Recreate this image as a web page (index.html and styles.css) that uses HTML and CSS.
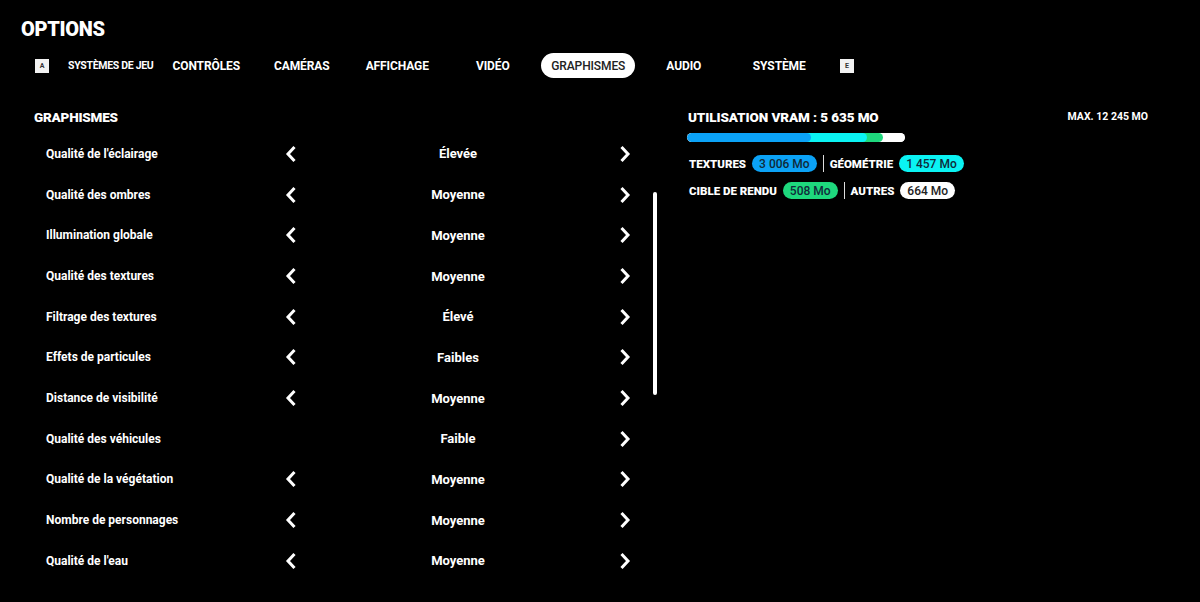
FILE: index.html
```html
<!DOCTYPE html>
<html lang="fr">
<head>
<meta charset="utf-8">
<title>Options</title>
<link rel="stylesheet" href="styles.css">
</head>
<body>
<div class="page">
  <h1 class="title">OPTIONS</h1>

  <nav class="tabs">
    <span class="key">A</span>
    <span class="tab tab-small">SYSTÈMES DE JEU</span>
    <span class="tab">CONTRÔLES</span>
    <span class="tab">CAMÉRAS</span>
    <span class="tab">AFFICHAGE</span>
    <span class="tab">VIDÉO</span>
    <span class="tab active">GRAPHISMES</span>
    <span class="tab">AUDIO</span>
    <span class="tab">SYSTÈME</span>
    <span class="key key-e">E</span>
  </nav>

  <main class="main">
    <section class="settings">
      <h2 class="section-title">GRAPHISMES</h2>
      <div class="settings-body">
        <div class="list">
          <div class="row"><span class="label">Qualité de l'éclairage</span><span class="chev"><svg width="12" height="18" viewBox="0 0 12 18"><path d="M9.5 2 L3 9 L9.5 16"/></svg></span><span class="value">Élevée</span><span class="chev"><svg width="12" height="18" viewBox="0 0 12 18"><path d="M2.5 2 L9 9 L2.5 16"/></svg></span></div>
          <div class="row"><span class="label">Qualité des ombres</span><span class="chev"><svg width="12" height="18" viewBox="0 0 12 18"><path d="M9.5 2 L3 9 L9.5 16"/></svg></span><span class="value">Moyenne</span><span class="chev"><svg width="12" height="18" viewBox="0 0 12 18"><path d="M2.5 2 L9 9 L2.5 16"/></svg></span></div>
          <div class="row"><span class="label">Illumination globale</span><span class="chev"><svg width="12" height="18" viewBox="0 0 12 18"><path d="M9.5 2 L3 9 L9.5 16"/></svg></span><span class="value">Moyenne</span><span class="chev"><svg width="12" height="18" viewBox="0 0 12 18"><path d="M2.5 2 L9 9 L2.5 16"/></svg></span></div>
          <div class="row"><span class="label">Qualité des textures</span><span class="chev"><svg width="12" height="18" viewBox="0 0 12 18"><path d="M9.5 2 L3 9 L9.5 16"/></svg></span><span class="value">Moyenne</span><span class="chev"><svg width="12" height="18" viewBox="0 0 12 18"><path d="M2.5 2 L9 9 L2.5 16"/></svg></span></div>
          <div class="row"><span class="label">Filtrage des textures</span><span class="chev"><svg width="12" height="18" viewBox="0 0 12 18"><path d="M9.5 2 L3 9 L9.5 16"/></svg></span><span class="value">Élevé</span><span class="chev"><svg width="12" height="18" viewBox="0 0 12 18"><path d="M2.5 2 L9 9 L2.5 16"/></svg></span></div>
          <div class="row"><span class="label">Effets de particules</span><span class="chev"><svg width="12" height="18" viewBox="0 0 12 18"><path d="M9.5 2 L3 9 L9.5 16"/></svg></span><span class="value">Faibles</span><span class="chev"><svg width="12" height="18" viewBox="0 0 12 18"><path d="M2.5 2 L9 9 L2.5 16"/></svg></span></div>
          <div class="row"><span class="label">Distance de visibilité</span><span class="chev"><svg width="12" height="18" viewBox="0 0 12 18"><path d="M9.5 2 L3 9 L9.5 16"/></svg></span><span class="value">Moyenne</span><span class="chev"><svg width="12" height="18" viewBox="0 0 12 18"><path d="M2.5 2 L9 9 L2.5 16"/></svg></span></div>
          <div class="row"><span class="label">Qualité des véhicules</span><span class="chev"></span><span class="value">Faible</span><span class="chev"><svg width="12" height="18" viewBox="0 0 12 18"><path d="M2.5 2 L9 9 L2.5 16"/></svg></span></div>
          <div class="row"><span class="label">Qualité de la végétation</span><span class="chev"><svg width="12" height="18" viewBox="0 0 12 18"><path d="M9.5 2 L3 9 L9.5 16"/></svg></span><span class="value">Moyenne</span><span class="chev"><svg width="12" height="18" viewBox="0 0 12 18"><path d="M2.5 2 L9 9 L2.5 16"/></svg></span></div>
          <div class="row"><span class="label">Nombre de personnages</span><span class="chev"><svg width="12" height="18" viewBox="0 0 12 18"><path d="M9.5 2 L3 9 L9.5 16"/></svg></span><span class="value">Moyenne</span><span class="chev"><svg width="12" height="18" viewBox="0 0 12 18"><path d="M2.5 2 L9 9 L2.5 16"/></svg></span></div>
          <div class="row"><span class="label">Qualité de l'eau</span><span class="chev"><svg width="12" height="18" viewBox="0 0 12 18"><path d="M9.5 2 L3 9 L9.5 16"/></svg></span><span class="value">Moyenne</span><span class="chev"><svg width="12" height="18" viewBox="0 0 12 18"><path d="M2.5 2 L9 9 L2.5 16"/></svg></span></div>
        </div>
        <div class="scroll-track"><div class="scroll-thumb"></div></div>
      </div>
    </section>

    <aside class="vram">
      <div class="vram-head">
        <span class="vram-title">UTILISATION VRAM : 5 635 MO</span>
        <span class="vram-max">MAX. 12 245 MO</span>
      </div>
      <div class="bar">
        <span class="seg seg-tex" style="flex: 3006"></span>
        <span class="seg seg-geo" style="flex: 1457"></span>
        <span class="seg seg-ren" style="flex: 508"></span>
        <span class="seg seg-oth" style="flex: 664"></span>
      </div>
      <div class="legend">
        <div class="legend-row">
          <span class="legend-label">TEXTURES</span><span class="pill pill-tex">3 006 Mo</span>
          <span class="sep"></span>
          <span class="legend-label">GÉOMÉTRIE</span><span class="pill pill-geo">1 457 Mo</span>
        </div>
        <div class="legend-row">
          <span class="legend-label">CIBLE DE RENDU</span><span class="pill pill-ren">508 Mo</span>
          <span class="sep"></span>
          <span class="legend-label">AUTRES</span><span class="pill pill-oth">664 Mo</span>
        </div>
      </div>
    </aside>
  </main>
</div>
</body>
</html>
```

FILE: styles.css
```css
* { box-sizing: border-box; }

html, body {
  margin: 0;
  padding: 0;
  background: #000;
  color: #fff;
  font-family: Roboto, "Liberation Sans", sans-serif;
}

.page {
  width: 1200px;
  height: 602px;
  overflow: hidden;
}

.title {
  margin: 17px 0 0 21px;
  font-size: 20px;
  line-height: 24px;
  font-weight: 900;
  letter-spacing: -0.3px;
}

.tabs {
  display: flex;
  align-items: center;
  height: 25px;
  margin-top: 12px;
  padding-left: 35px;
}

.key {
  width: 14px;
  height: 14px;
  background: #f2f2f2;
  color: #333;
  font-size: 7px;
  font-weight: 700;
  display: flex;
  align-items: center;
  justify-content: center;
  margin-right: 14px;
}

.key-e {
  margin-left: 13px;
  margin-right: 0;
}

.tab {
  width: 95.5px;
  height: 25px;
  display: flex;
  align-items: center;
  justify-content: center;
  font-size: 12px;
  font-weight: 700;
  letter-spacing: -0.1px;
  white-space: nowrap;
  border-radius: 13px;
}

.tab-small {
  font-size: 10.5px;
  letter-spacing: -0.3px;
}

.tab.active {
  background: #fff;
  color: #222;
  font-weight: 500;
  width: 94px;
  margin: 0 0.75px;
}

.main {
  display: flex;
  padding-left: 34px;
  margin-top: 29px;
}

.settings {
  width: 653px;
}

.section-title {
  margin: 0;
  font-size: 13.5px;
  line-height: 20px;
  font-weight: 900;
  letter-spacing: -0.2px;
}

.settings-body {
  display: flex;
  margin-top: 6.6px;
}

.list {
  width: 603px;
  padding-left: 12px;
}

.row {
  display: grid;
  grid-template-columns: 233px 24px 1fr 24px;
  align-items: center;
  height: 40.7px;
}

.label {
  font-size: 12px;
  font-weight: 700;
  white-space: nowrap;
}

.value {
  text-align: center;
  font-size: 13px;
  font-weight: 700;
}

.chev {
  display: flex;
  justify-content: center;
  align-items: center;
}

.chev svg path {
  fill: none;
  stroke: #fff;
  stroke-width: 3;
  stroke-linejoin: miter;
}

.scroll-track {
  margin-left: 16px;
  width: 4px;
}

.scroll-thumb {
  margin-top: 58px;
  height: 203px;
  width: 4px;
  border-radius: 2px;
  background: #fff;
}

.vram {
  width: 461px;
}

.vram-head {
  display: flex;
  justify-content: space-between;
  align-items: center;
  height: 20px;
  padding-left: 1px;
}

.vram-title {
  font-size: 13.5px;
  font-weight: 900;
  letter-spacing: -0.1px;
}

.vram-max {
  font-size: 10.5px;
  font-weight: 700;
  margin-top: -2px;
}

.bar {
  display: flex;
  width: 218px;
  height: 9px;
  margin-top: 6px;
  border-radius: 5px;
  overflow: hidden;
  background: #fff;
}

.seg {
  position: relative;
  height: 9px;
  border-radius: 0 5px 5px 0;
  margin-right: -5px;
}

.seg-tex { background: #0ba2f6; z-index: 4; border-radius: 5px; }
.seg-geo { background: #0af3f3; z-index: 3; }
.seg-ren { background: #1ed87d; z-index: 2; }
.seg-oth { background: #fff; z-index: 1; margin-right: 0; }

.legend {
  margin-top: 13px;
  padding-left: 2px;
}

.legend-row {
  display: flex;
  align-items: center;
  height: 17px;
  margin-bottom: 10px;
}

.legend-label {
  font-size: 11.5px;
  font-weight: 900;
  letter-spacing: 0;
  margin-right: 6px;
}

.pill {
  height: 17px;
  padding: 0 7px;
  border-radius: 9px;
  font-size: 12px;
  font-weight: 500;
  color: #102a3a;
  display: flex;
  align-items: center;
}

.pill-tex { background: #0ba2f6; }
.pill-geo { background: #0af3f3; }
.pill-ren { background: #1ed87d; }
.pill-oth { background: #fff; color: #222; }

.sep {
  width: 1px;
  height: 17px;
  background: #ddd;
  margin: 0 6px;
}
```
